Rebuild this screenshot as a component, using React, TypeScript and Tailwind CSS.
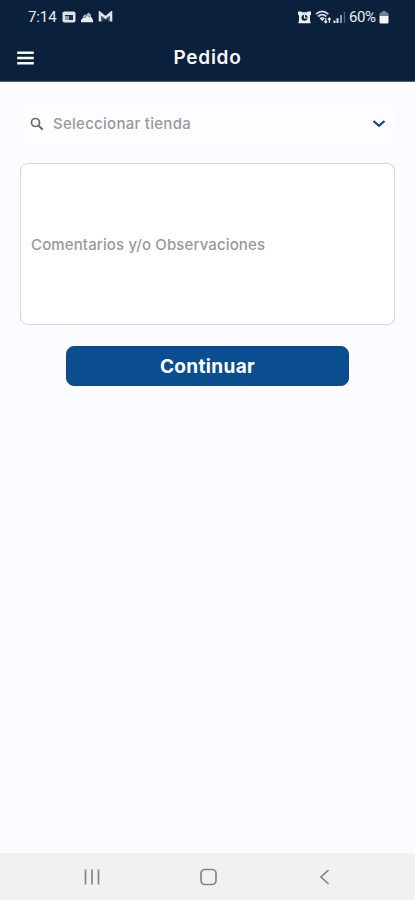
import React from "react";

function StatusBar() {
  return (
    <div className="flex h-[34px] items-center justify-between pl-[28px] pr-[26px] text-[#e9edf2]">
      <div className="flex items-center">
        <span className="w-[34px] whitespace-nowrap font-['Roboto',sans-serif] text-[15px] leading-[18px] tracking-[-0.1px]">7:14</span>
        <svg width="14" height="12" viewBox="0 0 14 12">
          <rect x="0.5" y="0.5" width="13" height="11" rx="1.8" fill="#dfe3e8" />
          <path d="M3 4h8v5H3z" fill="#1c3048" />
          <path d="M3 5h4v4H3z" fill="#8e9aa7" />
        </svg>
        <svg className="ml-[5px]" width="12" height="12" viewBox="0 0 12 12">
          <path d="M0 11.2V9l2.300-2.500L4 7.200 6 4.500l2.500 2L10 5.500l2 3.500v2.200z" fill="#e9edf2" />
          <path d="M1.500 6 3.500 3.500 5 4 7.500 1.500 10 3.500v2L8.500 6.500 6 4.500 4 7.200z" fill="#a5afba" />
        </svg>
        <svg className="ml-[5px]" width="15" height="12" viewBox="0 0 15 12">
          <path d="M2 10.5V2l5.500 4.500L13 2v8.500" fill="none" stroke="#dfe3e8" strokeWidth="2.600" />
          <path d="M4.500 10.500V6.500l3 2.500 3-2.500v4" fill="none" stroke="#5d6c7d" strokeWidth="0.800" />
        </svg>
      </div>
      <div className="flex items-center">
        <svg width="13" height="13" viewBox="0 0 13 13">
          <path d="M0 .5h3.400L4 1.200h5L9.600.5H13v3.200l-1 .8v5l.7 2.700H.3L1 9.500v-5l-1-.8z" fill="#e9edf2" />
          <circle cx="6.500" cy="6.700" r="3" fill="#0b213b" />
          <path d="M6.500 4v3h2.700" fill="none" stroke="#e9edf2" strokeWidth="1.200" />
        </svg>
        <svg className="ml-[4px]" width="17" height="14" viewBox="0 0 17 14">
          <path d="M1 4.200Q7.200-1.400 13.400 4.200M3 6.500q4.200-3.600 8.400 0M5.100 8.800q2.100-1.700 4.200 0" fill="none" stroke="#d5dae0" strokeWidth="1.700" />
          <path d="m5.500 9 1.800 2.300L9 9z" fill="#e9edf2" />
          <path d="M10.800 8v4.600M9.300 11l1.500 1.800 1.300-1.500M14.300 12.800V8M13 9.600 14.300 8l1.500 1.600" fill="none" stroke="#e9edf2" strokeWidth="1.200" />
        </svg>
        <svg className="ml-[1px]" width="13" height="13" viewBox="0 0 13 13">
          <path d="M1.500 12V9.500M4.500 12V7.200" stroke="#e9edf2" strokeWidth="2" />
          <path d="M8 12V4" stroke="#b0bac4" strokeWidth="1.600" />
          <path d="M11.500 12V1" stroke="#506177" strokeWidth="1.300" />
        </svg>
        <span className="ml-[3px] w-[29px] whitespace-nowrap font-['Roboto',sans-serif] text-[15px] leading-[18px] tracking-[-0.4px]">60%</span>
        <svg className="ml-[1px]" width="10" height="14" viewBox="0 0 10 14">
          <path d="M3 1h4v1.500h1.500Q9.500 2.500 9.500 4v2h-9V4q0-1.500 1-1.500H3z" fill="#74818f" />
          <path d="M.5 6h9v6q0 1.500-1 1.500h-7q-1 0-1-1.500z" fill="#f4f6f8" />
        </svg>
      </div>
    </div>
  );
}

function Header() {
  return (
    <header className="h-[82px] shrink-0 border-b border-[#536174] bg-[#0b213b]">
      <StatusBar />
      <div className="grid h-[48px] grid-cols-[60px_1fr_60px] items-center">
        <button aria-label="Menú" className="ml-[17px]">
          <svg width="17" height="14" viewBox="0 0 17 14">
            <path d="M.200 1.800h16.600M.200 7h16.600M.200 12.200h16.600" stroke="#f7f9fb" strokeWidth="2.400" />
          </svg>
        </button>
        <h1 className="text-center text-[19px] leading-6 font-semibold tracking-[0.75px] text-[#f7f9fb]">Pedido</h1>
      </div>
    </header>
  );
}

function NavigationBar() {
  return (
    <nav className="flex h-[47px] shrink-0 items-center justify-between bg-[#f1f1f1] px-[83px]">
      <svg width="18" height="18" viewBox="0 0 18 18">
        <path d="M2.500 1.500v15M9 1.500v15M15.500 1.500v15" stroke="#858585" strokeWidth="1.700" />
      </svg>
      <svg width="18" height="18" viewBox="0 0 18 18">
        <rect x="1" y="1.500" width="15" height="15" rx="4" fill="none" stroke="#858585" strokeWidth="1.700" />
      </svg>
      <svg width="16" height="18" viewBox="0 0 16 18">
        <path d="M12.500 2 5 9l7.500 7" fill="none" stroke="#858585" strokeWidth="1.700" />
      </svg>
    </nav>
  );
}

export default function App() {
  return (
    <div className="flex h-[900px] w-full flex-col bg-[#fbfcff] font-['Inter',sans-serif]">
      <Header />
      <main className="flex flex-1 flex-col px-[20px] pt-[21px]">
        <div className="flex h-[41px] items-center rounded-md bg-[#fdfdff] pl-[10px] pr-[9px]">
          <svg width="14" height="14" viewBox="0 0 14 14">
            <circle cx="5.500" cy="5.500" r="4" fill="none" stroke="#6a6a6a" strokeWidth="1.700" />
            <path d="m8.500 8.500 4.300 4.200" stroke="#6a6a6a" strokeWidth="2" />
          </svg>
          <span className="ml-[9px] text-[15px] leading-5 font-medium tracking-[0.27px] text-[#999999]">Seleccionar tienda</span>
          <svg className="ml-auto" width="14" height="10" viewBox="0 0 14 10">
            <path d="m1.500 2 5.500 4.800L12.500 2" fill="none" stroke="#174386" strokeWidth="2.100" />
          </svg>
        </div>
        <div className="mt-[19px] flex h-[162px] items-center rounded-[8px] border border-[#d6d7dc] bg-white pt-[2px] pl-[10px]">
          <span className="text-[15px] leading-5 font-medium tracking-[0.13px] text-[#999999]">Comentarios y/o Observaciones</span>
        </div>
        <button className="mx-auto mt-[21px] h-[40px] w-[283px] rounded-[8px] border border-[#1c4386] bg-[#0b4e90] pt-[2px] text-[19px] leading-6 font-bold tracking-[0.35px] text-white">
          Continuar
        </button>
      </main>
      <NavigationBar />
    </div>
  );
}
